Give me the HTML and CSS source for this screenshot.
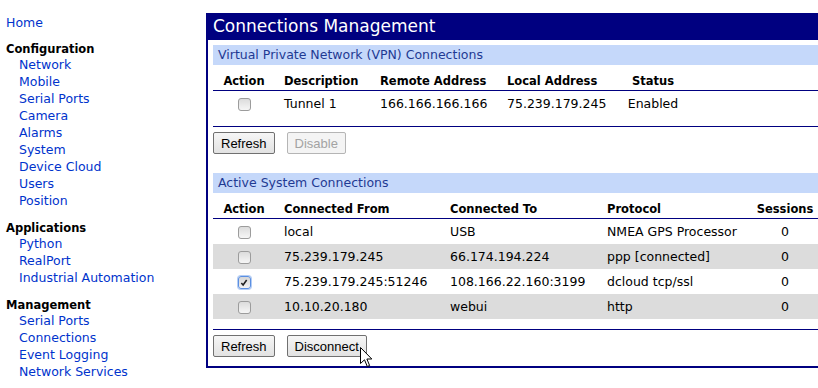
FILE: index.html
```html
<!DOCTYPE html>
<html lang="en">
<head>
    <meta charset="UTF-8">
    <title>Connections Management</title>
    <link rel="stylesheet" href="styles.css">
</head>
<body>
    <nav class="sidebar">
        <a href="#">Home</a>

        <div class="nav-group">
            <div class="nav-title">Configuration</div>
            <a href="#">Network</a>
            <a href="#">Mobile</a>
            <a href="#">Serial Ports</a>
            <a href="#">Camera</a>
            <a href="#">Alarms</a>
            <a href="#">System</a>
            <a href="#">Device Cloud</a>
            <a href="#">Users</a>
            <a href="#">Position</a>
        </div>

        <div class="nav-group">
            <div class="nav-title">Applications</div>
            <a href="#">Python</a>
            <a href="#">RealPort</a>
            <a href="#">Industrial Automation</a>
        </div>

        <div class="nav-group">
            <div class="nav-title">Management</div>
            <a href="#">Serial Ports</a>
            <a href="#">Connections</a>
            <a href="#">Event Logging</a>
            <a href="#">Network Services</a>
        </div>
    </nav>

    <div class="panel">
        <div class="panel-title">Connections Management</div>
        <div class="panel-body">
            <div class="section">
                <div class="section-title">Virtual Private Network (VPN) Connections</div>
                <table class="grid">
                    <colgroup>
                        <col style="width: 62px">
                        <col style="width: 96px">
                        <col style="width: 127px">
                        <col style="width: 120px">
                        <col style="width: 70px">
                        <col>
                    </colgroup>
                    <tr>
                        <th class="center">Action</th>
                        <th>Description</th>
                        <th>Remote Address</th>
                        <th>Local Address</th>
                        <th class="center">Status</th>
                        <th></th>
                    </tr>
                    <tr>
                        <td class="center"><input type="checkbox" class="check"></td>
                        <td>Tunnel 1</td>
                        <td>166.166.166.166</td>
                        <td>75.239.179.245</td>
                        <td class="center">Enabled</td>
                        <td></td>
                    </tr>
                </table>
                <div class="actions">
                    <button class="btn">Refresh</button>
                    <button class="btn" disabled>Disable</button>
                </div>
            </div>

            <div class="section">
                <div class="section-title">Active System Connections</div>
                <table class="grid">
                    <colgroup>
                        <col style="width: 62px">
                        <col style="width: 166px">
                        <col style="width: 157px">
                        <col style="width: 154px">
                        <col style="width: 66px">
                    </colgroup>
                    <tr>
                        <th class="center">Action</th>
                        <th>Connected From</th>
                        <th>Connected To</th>
                        <th>Protocol</th>
                        <th class="center">Sessions</th>
                    </tr>
                    <tr>
                        <td class="center"><input type="checkbox" class="check"></td>
                        <td>local</td>
                        <td>USB</td>
                        <td>NMEA GPS Processor</td>
                        <td class="center">0</td>
                    </tr>
                    <tr class="alt">
                        <td class="center"><input type="checkbox" class="check"></td>
                        <td>75.239.179.245</td>
                        <td>66.174.194.224</td>
                        <td>ppp [connected]</td>
                        <td class="center">0</td>
                    </tr>
                    <tr>
                        <td class="center"><input type="checkbox" class="check" checked></td>
                        <td>75.239.179.245:51246</td>
                        <td>108.166.22.160:3199</td>
                        <td>dcloud tcp/ssl</td>
                        <td class="center">0</td>
                    </tr>
                    <tr class="alt">
                        <td class="center"><input type="checkbox" class="check"></td>
                        <td>10.10.20.180</td>
                        <td>webui</td>
                        <td>http</td>
                        <td class="center">0</td>
                    </tr>
                </table>
                <div class="actions">
                    <button class="btn">Refresh</button>
                    <button class="btn">Disconnect</button>
                </div>
            </div>
        </div>
    </div>

    <!-- mouse pointer over the Disconnect button -->
    <svg class="cursor" width="13" height="21" viewBox="0 0 13 21">
        <path d="M0.5 0.5 V16.5 L4.5 12.8 L7.3 19.5 L9.6 18.5 L6.9 12 H11.8 Z" fill="#fff" stroke="#000" stroke-width="1" stroke-linejoin="miter"/>
    </svg>
</body>
</html>
```

FILE: styles.css
```css
html,
body {
    margin: 0;
    padding: 0;
    overflow: hidden;
}

body {
    display: flex;
    align-items: flex-start;
    font-family: 'DejaVu Sans', Verdana, sans-serif;
    font-size: 12.5px;
    color: #000;
    background: #fff;
}

/* left menu */
.sidebar {
    flex: none;
    width: 200px;
    padding: 14px 0 0 6px;
    display: flex;
    flex-direction: column;
    line-height: 17px;
}

.sidebar a {
    color: #0033cc;
    text-decoration: none;
}

.nav-group {
    display: flex;
    flex-direction: column;
    margin-top: 9px;
}

.nav-group + .nav-group {
    margin-top: 10px;
}

.nav-group a {
    padding-left: 13px;
}

.nav-title {
    font-size: 11.5px;
    font-weight: bold;
    line-height: 14px;
    padding-top: 2px;
}

/* main box */
.panel {
    flex: none;
    width: 620px;
    margin-top: 13px;
    border: 2px solid #000080;
    border-top: 0;
}

.panel-title {
    background: #000080;
    color: #fff;
    font-size: 17px;
    line-height: 27px;
    padding-left: 5px;
}

.panel-body {
    padding: 5px 5px 9px;
}

.section + .section {
    margin-top: 19px;
}

.section-title {
    background: #c5d8fa;
    color: #1f3a93;
    line-height: 20px;
    padding-left: 5px;
}

.grid {
    width: 605px;
    border-collapse: collapse;
    table-layout: fixed;
}

.grid th {
    font-size: 11.5px;
    font-weight: bold;
    text-align: left;
    line-height: 15px;
    padding: 9px 0 1px 9px;
    border-bottom: 1px solid #000080;
    white-space: nowrap;
}

.grid td {
    height: 25px;
    line-height: 25px;
    padding: 0 0 0 9px;
    white-space: nowrap;
}

.grid .center {
    text-align: center;
    padding-left: 0;
}

.grid tr.alt td {
    background: #dcdcdc;
}

.check {
    -webkit-appearance: none;
    appearance: none;
    width: 13px;
    height: 13px;
    margin: 0;
    border: 1px solid #9c9c9c;
    border-radius: 3px;
    background: linear-gradient(#dcdcdc, #f6f6f6);
    vertical-align: middle;
}

.check:checked {
    border-color: #5b8fe2;
    box-shadow: 0 0 0 1px #b3cdf5;
    background:
        url("data:image/svg+xml,%3Csvg xmlns='http://www.w3.org/2000/svg' viewBox='0 0 9 9'%3E%3Cpath d='M1.5 4.5l2 2.2 4-5.5' fill='none' stroke='%23222' stroke-width='1.8'/%3E%3C/svg%3E") center / 8px no-repeat,
        linear-gradient(#d6d6d6, #f2f2f2);
}

.actions {
    display: flex;
    gap: 12px;
    margin-top: 10px;
    padding-top: 5px;
    border-top: 1px solid #000080;
}

.btn {
    height: 22px;
    padding: 0 7px;
    font-family: 'Liberation Sans', Arial, sans-serif;
    font-size: 13px;
    color: #000;
    border: 1px solid #707070;
    border-radius: 2px;
    background: linear-gradient(#f6f6f6, #e2e2e2);
}

.btn:disabled {
    color: #a3a3a3;
    border-color: #b5b5b5;
    background: #f4f4f4;
}

.cursor {
    position: absolute;
    left: 360px;
    top: 347px;
}
```
